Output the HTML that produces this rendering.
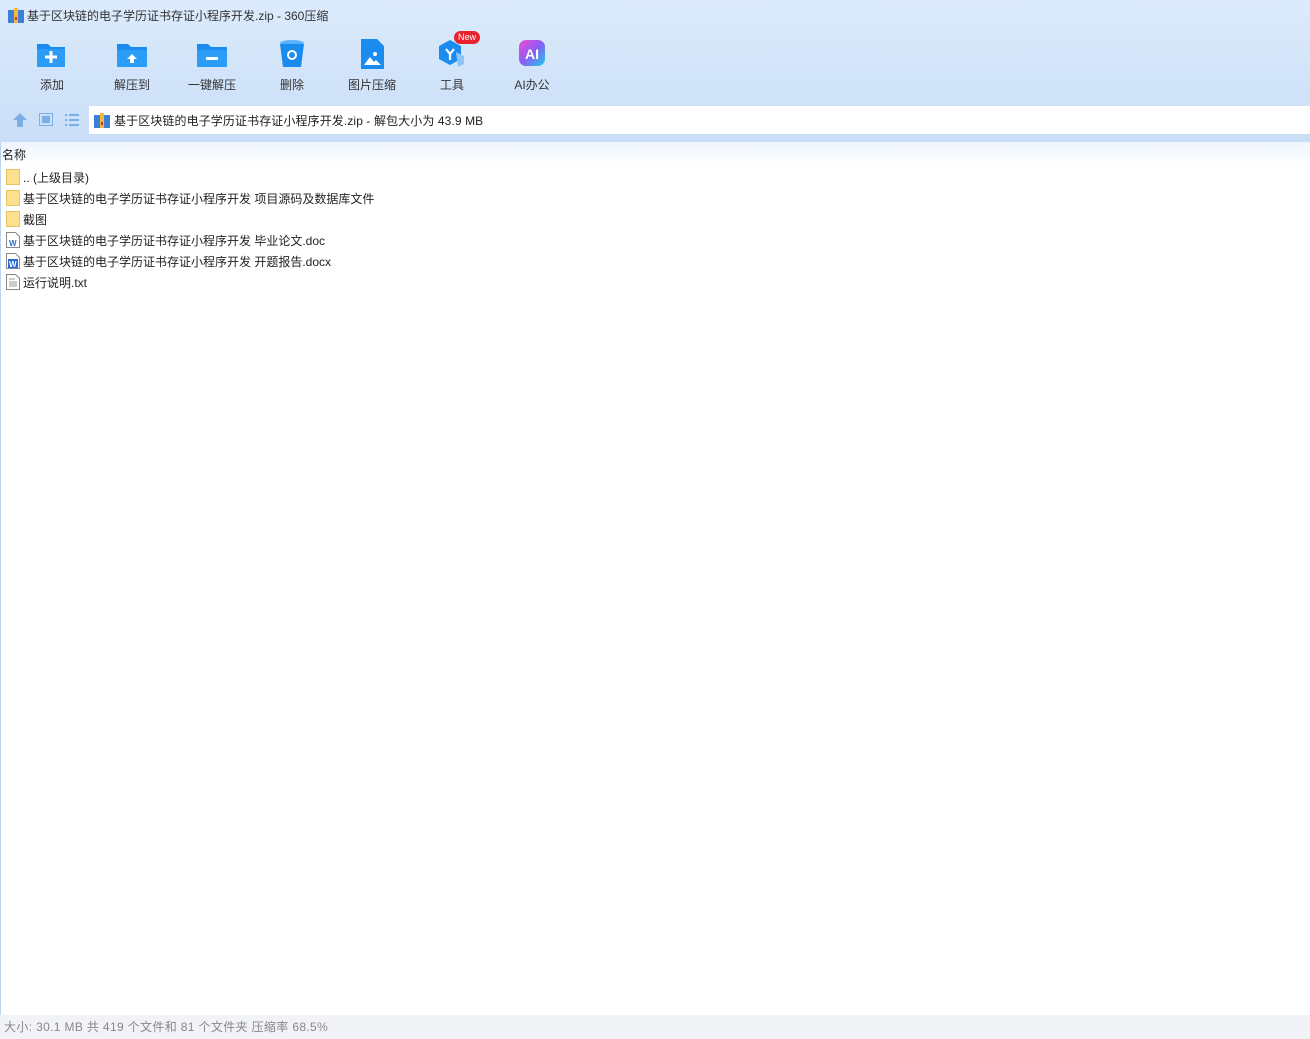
<!DOCTYPE html><html><head><meta charset="utf-8"><style>
*{margin:0;padding:0;box-sizing:border-box}
body{width:1310px;height:1039px;overflow:hidden;font-family:"Liberation Sans","Noto Sans CJK SC",sans-serif;font-size:12px;color:#222;background:#fff;position:relative}
.top{position:absolute;left:0;top:0;width:1310px;height:142px;background:linear-gradient(#dcebfc,#c9def7 100%)}
.title{position:absolute;left:27px;top:7px;font-size:12px;color:#333}
.tb{position:absolute;top:38px;width:80px;text-align:center;font-size:12px;color:#333}
.tb svg{display:block;margin:0 auto 6px}
.addr{position:absolute;left:89px;top:106px;width:1221px;height:28px;background:#fff;font-size:12px;padding:6px 0 0 25px;color:#222;letter-spacing:0.1px}
.hdr{position:absolute;left:0;top:142px;width:1310px;height:24px;background:linear-gradient(#eef5fd,#fff)}
.row{position:absolute;left:23px;font-size:12px;color:#222}
.ic{position:absolute;left:6px}
.status{position:absolute;left:0;top:1015px;width:1310px;height:24px;background:#f1f3f7;color:#888;font-size:12px;padding:3px 0 0 4px;letter-spacing:0.35px}
.lb{position:absolute;left:0;top:142px;width:1px;height:873px;background:#b9d3f0}
</style></head><body>
<div class="top"></div>
<svg style="position:absolute;left:8px;top:8px" width="16" height="15"><rect x="0" y="2" width="16" height="13" fill="#3b7fd8"/><rect x="6" y="0" width="4" height="15" fill="#f3b83a"/><rect x="7" y="9" width="2" height="3" fill="#c33"/></svg>
<div class="title">基于区块链的电子学历证书存证小程序开发.zip - 360压缩</div>
<div class="tb" style="left:12px"><svg width="32" height="32"><path d="M1 6h11l3 3h14v20H1z" fill="#1a8cf0"/><rect x="1" y="11" width="28" height="18" fill="#2b9cf7"/><path d="M15 13v12M9 19h12" stroke="#fff" stroke-width="3"/></svg>添加</div>
<div class="tb" style="left:92px"><svg width="32" height="32"><path d="M1 6h11l3 3h16v20H1z" fill="#1a8cf0"/><rect x="1" y="12" width="30" height="17" fill="#2b9cf7"/><path d="M16 16l-5 5h3v4h4v-4h3z" fill="#fff"/></svg>解压到</div>
<div class="tb" style="left:172px"><svg width="32" height="32"><path d="M1 6h11l3 3h16v20H1z" fill="#1a8cf0"/><rect x="1" y="12" width="30" height="17" fill="#2b9cf7"/><rect x="10" y="19" width="12" height="3" fill="#fff"/></svg>一键解压</div>
<div class="tb" style="left:252px"><svg width="32" height="32"><ellipse cx="16" cy="5" rx="12" ry="3" fill="#59b2fa"/><path d="M4 6h24l-3 23H7z" fill="#1a8cf0"/><circle cx="16" cy="17" r="4" fill="none" stroke="#fff" stroke-width="2"/></svg>删除</div>
<div class="tb" style="left:332px"><svg width="32" height="32"><path d="M5 1h16l7 7v23H5z" fill="#1a8cf0"/><path d="M8 27l6-8 4 5 2-2 5 5z" fill="#fff"/><circle cx="19" cy="16" r="2" fill="#fff"/></svg>图片压缩</div>
<div class="tb" style="left:412px"><svg width="36" height="32"><path d="M16 2l11 6v13l-11 6-11-6V8z" fill="#1a8cf0"/><path d="M22 14l8 4v8l-6 3z" fill="#8cc5fa"/><path d="M12 11l4 5 4-5M16 16v6" stroke="#fff" stroke-width="2.2" fill="none"/></svg>工具</div>
<div style="position:absolute;left:454px;top:31px;width:26px;height:13px;border-radius:7px;background:#e8232d;color:#fff;font-size:9px;text-align:center;line-height:13px">New</div>
<div class="tb" style="left:492px"><svg width="32" height="32"><defs><linearGradient id="g" x1="0" y1="0" x2="1" y2="1"><stop offset="0" stop-color="#f04bd0"/><stop offset=".5" stop-color="#8a5cf5"/><stop offset="1" stop-color="#1ad0e8"/></linearGradient></defs><rect x="3" y="2" width="26" height="26" rx="7" fill="url(#g)"/><text x="16" y="21" fill="#fff" font-size="14" font-weight="bold" text-anchor="middle" font-family="Liberation Sans">AI</text></svg>AI办公</div>
<svg style="position:absolute;left:12px;top:113px" width="16" height="14"><path d="M8 0l7 7h-4v7H5V7H1z" fill="#7aaee6"/></svg>
<svg style="position:absolute;left:39px;top:113px" width="14" height="13"><rect x="0.5" y="0.5" width="13" height="12" fill="none" stroke="#7aaee6"/><rect x="3" y="3" width="8" height="7" fill="#7aaee6"/></svg>
<svg style="position:absolute;left:65px;top:114px" width="14" height="12"><g fill="#7aaee6"><rect x="0" y="0" width="2" height="2"/><rect x="0" y="5" width="2" height="2"/><rect x="0" y="10" width="2" height="2"/><rect x="4" y="0" width="10" height="2"/><rect x="4" y="5" width="10" height="2"/><rect x="4" y="10" width="10" height="2"/></g></svg>
<div class="addr">基于区块链的电子学历证书存证小程序开发.zip - 解包大小为 43.9 MB</div>
<svg style="position:absolute;left:94px;top:113px" width="16" height="15"><rect x="0" y="2" width="16" height="13" fill="#3b7fd8"/><rect x="6" y="0" width="4" height="15" fill="#f3b83a"/><rect x="7" y="9" width="2" height="3" fill="#c33"/></svg>
<div class="hdr"></div>
<div style="position:absolute;left:2px;top:146px">名称</div>
<div class="lb"></div>
<svg class="ic" style="top:169px" width="14" height="16"><rect x=".5" y=".5" width="13" height="15" fill="#fbe08f" stroke="#e6c45e"/></svg><div class="row" style="top:169px">.. (上级目录)</div>
<svg class="ic" style="top:190px" width="14" height="16"><rect x=".5" y=".5" width="13" height="15" fill="#fbe08f" stroke="#e6c45e"/></svg><div class="row" style="top:190px">基于区块链的电子学历证书存证小程序开发 项目源码及数据库文件</div>
<svg class="ic" style="top:211px" width="14" height="16"><rect x=".5" y=".5" width="13" height="15" fill="#fbe08f" stroke="#e6c45e"/></svg><div class="row" style="top:211px">截图</div>
<svg class="ic" style="top:232px" width="14" height="16"><path d="M.5.5h9l4 4v11H.5z" fill="#fff" stroke="#888"/><text x="3" y="14" font-size="8" fill="#2a6bd8" font-weight="bold" font-family="Liberation Sans">W</text></svg><div class="row" style="top:232px">基于区块链的电子学历证书存证小程序开发 毕业论文.doc</div>
<svg class="ic" style="top:253px" width="14" height="16"><path d="M.5.5h9l4 4v11H.5z" fill="#fff" stroke="#888"/><rect x="2" y="6" width="10" height="9" fill="#2a6bd8"/><text x="3" y="14" font-size="8" fill="#fff" font-weight="bold" font-family="Liberation Sans">W</text></svg><div class="row" style="top:253px">基于区块链的电子学历证书存证小程序开发 开题报告.docx</div>
<svg class="ic" style="top:274px" width="14" height="16"><path d="M.5.5h9l4 4v11H.5z" fill="#fff" stroke="#888"/><path d="M3 5h6M3 8h8M3 10h8M3 12h8" stroke="#999"/></svg><div class="row" style="top:274px">运行说明.txt</div>
<div class="status">大小: 30.1 MB 共 419 个文件和 81 个文件夹 压缩率 68.5%</div>
</body></html>
